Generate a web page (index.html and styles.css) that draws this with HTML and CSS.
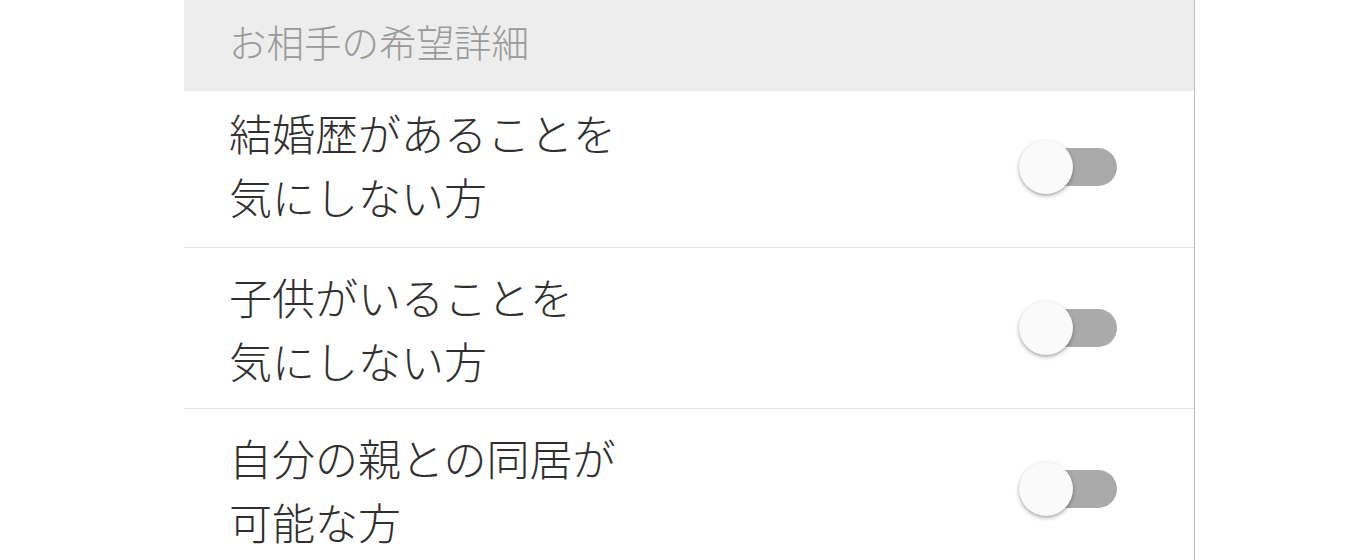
FILE: index.html
```html
<!DOCTYPE html>
<html lang="ja">
<head>
<meta charset="utf-8">
<title>お相手の希望詳細</title>
<link rel="stylesheet" href="styles.css">
</head>
<body>
<div class="panel">
  <div class="section-header">お相手の希望詳細</div>
  <div class="row row-first">
    <div class="label">結婚歴があることを<br>気にしない方</div>
    <div class="switch"><span class="track"></span><span class="knob"></span></div>
  </div>
  <div class="row">
    <div class="label">子供がいることを<br>気にしない方</div>
    <div class="switch"><span class="track"></span><span class="knob"></span></div>
  </div>
  <div class="row">
    <div class="label">自分の親との同居が<br>可能な方</div>
    <div class="switch"><span class="track"></span><span class="knob"></span></div>
  </div>
</div>
</body>
</html>
```
FILE: styles.css
```css
html, body {
  margin: 0;
  padding: 0;
  background: #ffffff;
}
body {
  font-family: "Noto Sans CJK JP", "Noto Sans", sans-serif;
  overflow: hidden;
}
.panel {
  margin-left: 184px;
  width: 1010px;
  border-right: 1px solid #bdbdbd;
  min-height: 700px;
  background: #ffffff;
}
.section-header {
  height: 91px;
  background: #ededed;
  color: #9a9a9a;
  font-size: 37.5px;
  font-weight: 300;
  line-height: 1;
  display: flex;
  align-items: center;
  padding-left: 45px;
  padding-bottom: 9px;
  box-sizing: border-box;
}
.row {
  display: flex;
  align-items: center;
  justify-content: space-between;
  padding: 16px 77px 16px 45px;
  border-bottom: 1px solid #e2e2e2;
}
.row-first {
  padding-top: 9px;
  padding-bottom: 19px;
}
.row-first .switch {
  margin-top: 5px;
}
.label {
  font-size: 43px;
  font-weight: 300;
  line-height: 64px;
  color: #303030;
}
.switch {
  position: relative;
  width: 98px;
  height: 54px;
  flex: none;
}
.track {
  position: absolute;
  left: 16px;
  top: 8px;
  width: 82px;
  height: 38px;
  border-radius: 19px;
  background: #aaaaaa;
}
.knob {
  position: absolute;
  left: 0;
  top: 0;
  width: 54px;
  height: 54px;
  border-radius: 50%;
  background: #fafafa;
  box-shadow: 0 2px 4px rgba(0, 0, 0, 0.28), 0 1px 2px rgba(0, 0, 0, 0.12);
}
```
